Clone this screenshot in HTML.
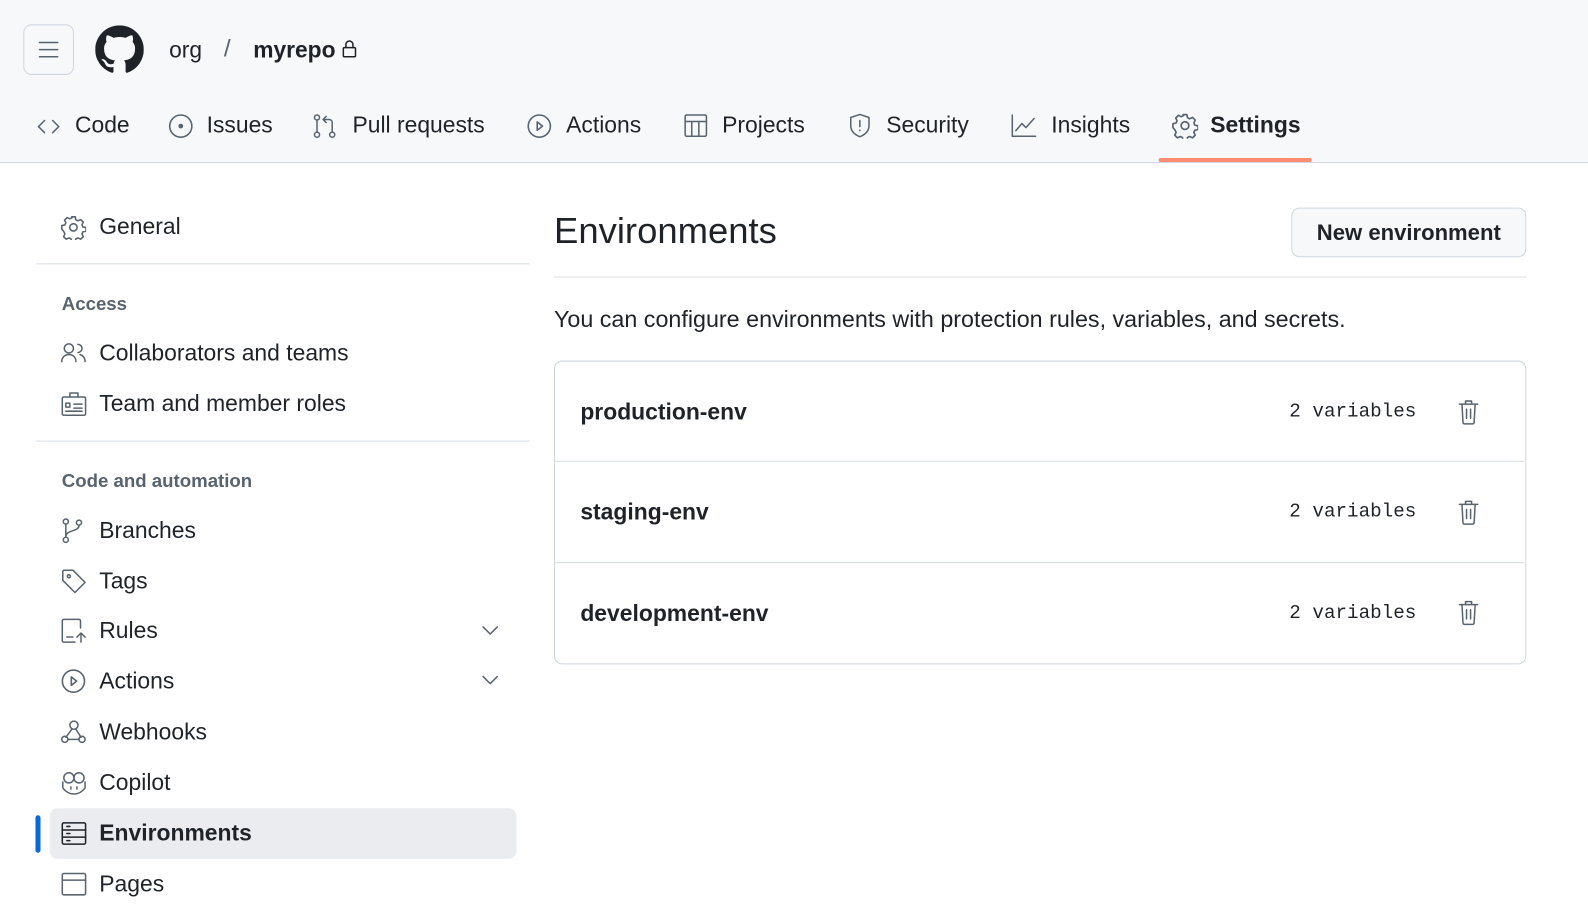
<!DOCTYPE html>
<html><head><meta charset="utf-8"><style>
*{box-sizing:border-box;margin:0;padding:0}
body{width:1588px;height:912px;overflow:hidden;background:#fff;font-family:"Liberation Sans",sans-serif;color:#1f2328;position:relative}
#w{position:absolute;left:0;top:0;width:1568px;height:901px;transform:scale(1.0128);transform-origin:0 0}
.hdr{position:absolute;left:0;top:0;width:1570px;height:161px;background:#f6f8fa;border-bottom:1px solid #d0d7de}
.abs{position:absolute}
.ic{position:absolute;fill:none;stroke:#59636e;stroke-width:1.5;stroke-linecap:round;stroke-linejoin:round}
.t{position:absolute;font-size:22.5px;line-height:26px;white-space:nowrap}
.tab{position:absolute;top:111px;font-size:22.6px;line-height:26px;color:#1f2328;white-space:nowrap}
.side{position:absolute;left:98px;font-size:22.6px;line-height:26px;white-space:nowrap}
.sh{position:absolute;left:61px;font-size:18.4px;font-weight:bold;color:#59636e}
.div{position:absolute;height:1px;background:#d8dee4}
.row{position:absolute;left:548px;width:957px;height:99px;border-top:1px solid #d8dee4}
.row b{position:absolute;left:25px;top:37px;font-size:22.6px}
.row span{position:absolute;left:725px;top:38px;font-family:"Liberation Mono",monospace;font-size:19px;letter-spacing:0}
</style></head><body><div id="w">
<div class="hdr"></div>
<div class="abs" style="left:23px;top:24px;width:50px;height:50px;border:1px solid #d0d7de;border-radius:8px;background:#f6f8fa"></div>
<svg class="ic" style="left:36px;top:37px" width="24" height="24" viewBox="0 0 24 24"><path d="M3 5h18M3 12h18M3 19h18"/></svg>
<svg class="abs" style="left:94px;top:25px" width="48" height="48" viewBox="0 0 16 16"><path fill="#1f2328" d="M8 0C3.58 0 0 3.58 0 8c0 3.54 2.29 6.530 5.47 7.59.4.07.55-.17.55-.38 0-.19-.01-.82-.01-1.49-2.01.37-2.53-.49-2.69-.94-.09-.23-.48-.94-.82-1.13-.28-.15-.68-.52-.01-.53.63-.01 1.08.58 1.230.82.72 1.21 1.87.87 2.33.66.07-.52.28-.87.51-1.07-1.78-.2-3.64-.89-3.64-3.95 0-.87.31-1.59.82-2.150-.08-.2-.36-1.02.08-2.12 0 0 .67-.21 2.2.82.64-.18 1.32-.27 2-.27.68 0 1.36.09 2 .27 1.53-1.04 2.2-.82 2.2-.82.44 1.1.16 1.92.08 2.12.51.56.82 1.27.82 2.15 0 3.07-1.87 3.75-3.65 3.95.29.25.54.73.54 1.48 0 1.07-.01 1.93-.01 2.2 0 .21.15.46.55.38A8.013 8.013 0 0016 8c0-4.42-3.58-8-8-8z"/></svg>
<div class="t" style="left:167px;top:37px">org</div>
<div class="t" style="left:221px;top:36px;color:#59636e;font-size:24px">/</div>
<div class="t" style="left:250px;top:37px;font-weight:bold">myrepo</div>
<svg class="ic" style="left:336px;top:38px;stroke:#1f2328" width="18" height="20" viewBox="0 0 18 20"><rect x="3" y="9" width="12" height="9" rx="1"/><path d="M5.5 9V6a3.5 3.5 0 017 0v3"/></svg>

<svg class="ic" style="left:36px;top:113px" width="24" height="24" viewBox="0 0 24 24"><path d="M8 6l-6 6 6 6M16 6l6 6-6 6"/></svg><div class="tab" style="left:74px">Code</div>
<svg class="ic" style="left:166px;top:112px" width="25" height="25" viewBox="0 0 24 24"><circle cx="12" cy="12" r="10.5"/><circle cx="12" cy="12" r="1.5" fill="#59636e"/></svg><div class="tab" style="left:204px">Issues</div>
<svg class="ic" style="left:309px;top:112px" width="24" height="26" viewBox="0 0 24 26"><circle cx="4" cy="4" r="2.5"/><circle cx="4" cy="21" r="2.5"/><circle cx="19" cy="21" r="2.5"/><path d="M4 7v11M19 18V9a3 3 0 00-3-3h-5M13 3l-3 3 3 3"/></svg><div class="tab" style="left:348px">Pull requests</div>
<svg class="ic" style="left:520px;top:112px" width="25" height="25" viewBox="0 0 24 24"><circle cx="12" cy="12" r="10.5"/><path d="M10 8l5 4-5 4z"/></svg><div class="tab" style="left:559px">Actions</div>
<svg class="ic" style="left:675px;top:112px" width="24" height="24" viewBox="0 0 24 24"><rect x="1.5" y="1.5" width="21" height="21" rx="1.5"/><path d="M1.5 8h21M8 8v14.5M15 8v14.5"/></svg><div class="tab" style="left:713px">Projects</div>
<svg class="ic" style="left:837px;top:111px" width="24" height="26" viewBox="0 0 24 26"><path d="M12 2l9 3v8c0 6-4 9-9 11-5-2-9-5-9-11V5z"/><path d="M12 8v6M12 17.5v.5"/></svg><div class="tab" style="left:875px">Security</div>
<svg class="ic" style="left:998px;top:112px" width="26" height="24" viewBox="0 0 26 24"><path d="M1.5 1.5v21h23M5 17l6-7 4 4 8-9"/></svg><div class="tab" style="left:1038px">Insights</div>
<svg class="ic" style="left:1157px;top:111px" width="26" height="26" viewBox="0 0 24 24"><circle cx="12" cy="12" r="3.5"/><path d="M10.3 2h3.4l.6 2.8 2 1 2.6-1.2 2.4 2.4-1.2 2.6.9 2 2.9.6v3.4l-2.9.6-.9 2 1.2 2.6-2.4 2.4-2.6-1.2-2 .9-.6 2.9h-3.4l-.6-2.9-2-.9-2.6 1.2-2.4-2.4 1.2-2.6-.9-2L1 13.7v-3.4l2.9-.6.9-2-1.2-2.6L6 2.7l2.6 1.2 2-1z"/></svg><div class="tab" style="left:1195px;font-weight:bold">Settings</div>
<div class="abs" style="left:1144px;top:156px;width:151px;height:4px;background:#fd8c73;border-radius:2px"></div>

<svg class="ic" style="left:60px;top:212px" width="25" height="25" viewBox="0 0 24 24"><circle cx="12" cy="12" r="3.5"/><path d="M10.3 2h3.4l.6 2.8 2 1 2.6-1.2 2.4 2.4-1.2 2.6.9 2 2.9.6v3.4l-2.9.6-.9 2 1.2 2.6-2.4 2.4-2.6-1.2-2 .9-.6 2.9h-3.4l-.6-2.9-2-.9-2.6 1.2-2.4-2.4 1.2-2.6-.9-2L1 13.7v-3.4l2.9-.6.9-2-1.2-2.6L6 2.7l2.6 1.2 2-1z"/></svg>
<div class="side" style="top:211px">General</div>
<div class="div" style="left:36px;top:260px;width:487px"></div>
<div class="sh" style="top:289px">Access</div>
<svg class="ic" style="left:60px;top:337px" width="26" height="24" viewBox="0 0 26 24"><circle cx="8" cy="7" r="4.5"/><path d="M1 20c0-4 3-7 7-7s7 3 7 7M17 3a4 4 0 010 8M19 13c3 1 5 3.5 5 7"/></svg>
<div class="side" style="top:336px">Collaborators and teams</div>
<svg class="ic" style="left:60px;top:386px" width="26" height="26" viewBox="0 0 26 26"><rect x="1.5" y="6" width="23" height="18" rx="1.5"/><path d="M9 6V2h8v4M5 12h4v4H5zM13 13h8M13 17h8M5 20h16"/></svg>
<div class="side" style="top:386px">Team and member roles</div>
<div class="div" style="left:36px;top:435px;width:487px"></div>
<div class="sh" style="top:464px">Code and automation</div>
<svg class="ic" style="left:60px;top:511px" width="24" height="26" viewBox="0 0 24 26"><circle cx="5" cy="4" r="2.5"/><circle cx="5" cy="22" r="2.5"/><circle cx="18" cy="5" r="2.5"/><path d="M5 7v12M18 8c0 6-13 4-13 11"/></svg>
<div class="side" style="top:511px">Branches</div>
<svg class="ic" style="left:60px;top:561px" width="26" height="26" viewBox="0 0 26 26"><path d="M2 3v9l12 12 10-10L12 2H3z"/><circle cx="8" cy="8" r="1.5"/></svg>
<div class="side" style="top:561px">Tags</div>
<svg class="ic" style="left:60px;top:610px" width="26" height="26" viewBox="0 0 26 26"><path d="M14 24H3a1.5 1.5 0 01-1.5-1.5V3A1.5 1.5 0 013 1.5h15a1.5 1.5 0 011.5 1.5v7M6 19h6M20 24v-9M16 19l4-4 4 4"/></svg>
<div class="side" style="top:610px">Rules</div>
<svg class="ic" style="left:474px;top:614px" width="20" height="18" viewBox="0 0 20 18"><path d="M3 5l7 7 7-7"/></svg>
<svg class="ic" style="left:60px;top:660px" width="25" height="25" viewBox="0 0 24 24"><circle cx="12" cy="12" r="10.5"/><path d="M10 8l5 4-5 4z"/></svg>
<div class="side" style="top:660px">Actions</div>
<svg class="ic" style="left:474px;top:663px" width="20" height="18" viewBox="0 0 20 18"><path d="M3 5l7 7 7-7"/></svg>
<svg class="ic" style="left:59px;top:710px" width="28" height="26" viewBox="0 0 28 26"><circle cx="14" cy="6" r="4"/><circle cx="5" cy="20" r="3"/><circle cx="22" cy="20" r="3"/><path d="M12 10l-6 8M8 20h11M16 10l5 8"/></svg>
<div class="side" style="top:710px">Webhooks</div>
<svg class="ic" style="left:59px;top:760px" width="28" height="26" viewBox="0 0 28 26"><circle cx="9" cy="8" r="5"/><circle cx="19" cy="8" r="5"/><path d="M3 12v6c3 4 7 6 11 6s8-2 11-6v-6M11 17v2M17 17v2"/></svg>
<div class="side" style="top:760px">Copilot</div>
<div class="abs" style="left:49px;top:798px;width:461px;height:50px;background:#eaecef;border-radius:8px"></div>
<div class="abs" style="left:35px;top:805px;width:5px;height:37px;background:#0969da;border-radius:3px"></div>
<svg class="ic" style="left:60px;top:811px;stroke:#1f2328" width="26" height="24" viewBox="0 0 26 24"><rect x="1.5" y="1.5" width="23" height="21" rx="1.5"/><path d="M1.5 8.5h23M1.5 15.5h23M6 5h3M6 12h3M6 19h3"/></svg>
<div class="side" style="top:810px;font-weight:bold">Environments</div>
<svg class="ic" style="left:60px;top:861px" width="26" height="24" viewBox="0 0 26 24"><rect x="1.5" y="1.5" width="23" height="21" rx="1.5"/><path d="M1.5 8h23"/></svg>
<div class="side" style="top:860px">Pages</div>

<div class="abs" style="left:547px;top:207px;font-size:36px;line-height:42px">Environments</div>
<div class="abs" style="left:1275px;top:205px;width:232px;height:49px;border:1px solid #d0d7de;border-radius:8px;background:#f6f8fa;font-size:21.8px;font-weight:bold;text-align:center;line-height:47px">New environment</div>
<div class="div" style="left:547px;top:273px;width:960px"></div>
<div class="abs" style="left:547px;top:303px;font-size:23px;line-height:25px;white-space:nowrap">You can configure environments with protection rules, variables, and secrets.</div>
<div class="abs" style="left:547px;top:356px;width:960px;height:300px;border:1px solid #d0d7de;border-radius:8px"></div>
<div class="row" style="top:357px;border-top:none"><b>production-env</b><span>2 variables</span></div>
<div class="row" style="top:455px"><b>staging-env</b><span>2 variables</span></div>
<div class="row" style="top:555px"><b>development-env</b><span>2 variables</span></div>
<svg class="ic" style="left:1439px;top:394px" width="22" height="26" viewBox="0 0 22 26"><path d="M2 5h18M8 5V2h6v3M4.5 5l1 18a1.5 1.5 0 001.5 1.5h8a1.5 1.5 0 001.5-1.5l1-18M9 10v9M13 10v9"/></svg>
<svg class="ic" style="left:1439px;top:493px" width="22" height="26" viewBox="0 0 22 26"><path d="M2 5h18M8 5V2h6v3M4.5 5l1 18a1.5 1.5 0 001.5 1.5h8a1.5 1.5 0 001.5-1.5l1-18M9 10v9M13 10v9"/></svg>
<svg class="ic" style="left:1439px;top:592px" width="22" height="26" viewBox="0 0 22 26"><path d="M2 5h18M8 5V2h6v3M4.5 5l1 18a1.5 1.5 0 001.5 1.5h8a1.5 1.5 0 001.5-1.5l1-18M9 10v9M13 10v9"/></svg>
</div></body></html>
